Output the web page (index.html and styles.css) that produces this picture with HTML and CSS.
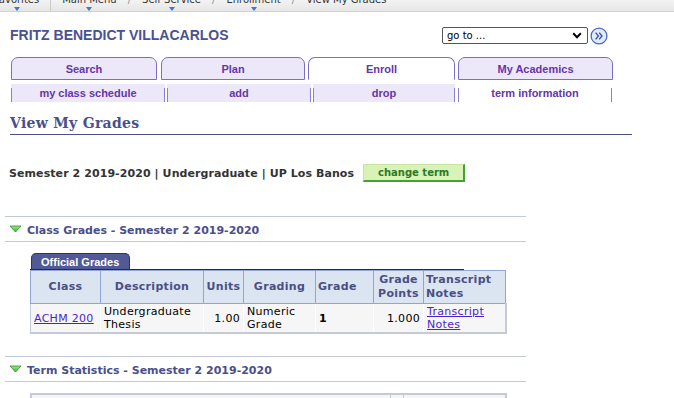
FILE: index.html
```html
<!DOCTYPE html>
<html lang="en">
 <head>
  <meta charset="utf-8">
  <title>View My Grades</title>
  <link rel="stylesheet" href="styles.css">
 </head>
 <body>
  <div class="crumbs">
   <div class="crumb-line">
    <span class="crumb fav">Favorites<i></i></span>
    <span class="bar-sep"></span>
    <span class="crumb">Main Menu<i></i></span>
    <span class="slash">/</span>
    <span class="crumb">Self Service<i></i></span>
    <span class="slash">/</span>
    <span class="crumb">Enrollment<i></i></span>
    <span class="slash">/</span>
    <span class="crumb">View My Grades</span>
   </div>
  </div>

  <div class="pagehead">
   <h1 class="student">FRITZ BENEDICT VILLACARLOS</h1>
   <div class="goto">
    <div class="goto-select">
     <span>go to ...</span>
     <svg width="10" height="7" viewBox="0 0 10 7"><path d="M1.2 1.3 L5 5.2 L8.8 1.3" fill="none" stroke="#000" stroke-width="2"/></svg>
    </div>
    <svg class="goto-btn" width="18" height="18" viewBox="0 0 18 18">
     <circle cx="9" cy="9" r="7.9" fill="#e3ebfb" stroke="#4a68c4" stroke-width="1.3"/>
     <path d="M5.6 5.6 L8.4 9 L5.6 12.4 M9.2 5.6 L12 9 L9.2 12.4" fill="none" stroke="#2f4fb0" stroke-width="1.3"/>
    </svg>
   </div>
  </div>

  <nav class="tabs">
   <a class="tab t1">Search</a>
   <a class="tab t2">Plan</a>
   <a class="tab t3 active">Enroll</a>
   <a class="tab t4">My Academics</a>
  </nav>
  <nav class="subtabs">
   <a class="subtab s1">my class schedule</a>
   <a class="subtab s2">add</a>
   <a class="subtab s3">drop</a>
   <a class="subtab s4 active">term information</a>
  </nav>

  <h2 class="page-title">View My Grades</h2>

  <div class="term-row">
   <span class="term-text">Semester 2 2019-2020 | Undergraduate | UP Los Banos</span>
   <a class="btn-change">change term</a>
  </div>

  <div class="section-head">
   <svg width="13" height="8" viewBox="0 0 13 8">
    <defs><linearGradient id="g1" x1="0" y1="0" x2="0" y2="1"><stop offset="0" stop-color="#a6e690"/><stop offset="1" stop-color="#3dae2c"/></linearGradient></defs>
    <path d="M1 1 L12 1 L6.5 7 Z" fill="url(#g1)" stroke="#2e8a28" stroke-width="0.8"/>
   </svg>
   <span>Class Grades - Semester 2 2019-2020</span>
  </div>

  <div class="grid-box">
   <div class="grid-tabs"><span class="grid-tab">Official Grades</span></div>
   <table class="grades">
    <colgroup>
     <col style="width:70px"><col style="width:103px"><col style="width:40px"><col style="width:72px">
     <col style="width:58px"><col style="width:50px"><col style="width:82px">
    </colgroup>
    <tr>
     <th>Class</th>
     <th>Description</th>
     <th>Units</th>
     <th>Grading</th>
     <th class="left">Grade</th>
     <th>Grade Points</th>
     <th class="left">Transcript Notes</th>
    </tr>
    <tr>
     <td><a href="#">ACHM 200</a></td>
     <td>Undergraduate Thesis</td>
     <td class="num">1.00</td>
     <td>Numeric Grade</td>
     <td class="bold">1</td>
     <td class="num">1.000</td>
     <td><a href="#">Transcript Notes</a></td>
    </tr>
   </table>
  </div>

  <div class="section-head term-stats">
   <svg width="13" height="8" viewBox="0 0 13 8">
    <defs><linearGradient id="g2" x1="0" y1="0" x2="0" y2="1"><stop offset="0" stop-color="#a6e690"/><stop offset="1" stop-color="#3dae2c"/></linearGradient></defs>
    <path d="M1 1 L12 1 L6.5 7 Z" fill="url(#g2)" stroke="#2e8a28" stroke-width="0.8"/>
   </svg>
   <span>Term Statistics - Semester 2 2019-2020</span>
  </div>

  <table class="stats">
   <colgroup><col style="width:359px"><col style="width:13px"><col style="width:103px"></colgroup>
   <tr><td>&nbsp;</td><td>&nbsp;</td><td>&nbsp;</td></tr>
   <tr><td>&nbsp;</td><td>&nbsp;</td><td>&nbsp;</td></tr>
  </table>
 </body>
</html>
```

FILE: styles.css
```css
html, body {
  margin:0; background:#fff;
  font-family:"DejaVu Sans", sans-serif; font-size:11px; color:#000;
}
a { cursor:pointer; }

/* breadcrumb bar, scrolled partly out of view */
.crumbs {
  height:11px; overflow:hidden;
  background:linear-gradient(#f3f3f3, #e6e6e6);
  border-bottom:1px solid #d2d2d2;
}
.crumb-line {
  display:flex; align-items:flex-start;
  margin-top:-6px;
  font-size:10px; line-height:12px; color:#333;
}
.crumb {
  display:flex; flex-direction:column; align-items:center; white-space:nowrap;
}
.crumb i {
  width:0; height:0; margin-top:1px;
  border-left:3px solid transparent; border-right:3px solid transparent;
  border-top:4px solid #3a78d2;
}
.fav { margin-left:-6px; }
.bar-sep { width:1px; height:24px; background:#c9c9c9; margin:0 11px; }
.slash { padding:0 11px; color:#8a90a6; }

/* student name + go to */
.pagehead {
  display:flex; justify-content:space-between; align-items:center;
  width:598px; height:17px; margin:15px 0 0 10px;
}
.student {
  margin:0; font:bold 14px/17px "Liberation Sans", Arial, sans-serif; color:#4a5192;
}
.goto { display:flex; align-items:center; gap:2px; }
.goto-select {
  display:flex; justify-content:space-between; align-items:center;
  box-sizing:border-box; width:146px; height:17px; padding:0 5px 0 4px;
  border:1px solid #555; border-radius:2px; background:#fff;
  font-size:10px; color:#000;
}

/* tabs */
.tabs { display:flex; margin:13px 0 0 11px; }
.tab, .subtab {
  display:flex; align-items:center; justify-content:center; box-sizing:border-box;
  font:bold 11px "Liberation Sans", Arial, sans-serif; color:#6536a6;
}
.tab {
  height:23px;
  background:#ece8fa; border:1px solid #7c6ec9; border-radius:7px 7px 0 0;
}
.tab.active { background:#fff; border-bottom-color:#fff; }
.t1 { width:146px; }
.t2 { width:144px; margin-left:4px; }
.t3 { width:147px; margin-left:3px; }
.t4 { width:155px; margin-left:3px; }

.subtabs { display:flex; margin:4px 0 0 11px; }
.subtab {
  position:relative; height:18px; background:#ece8fa;
}
.subtab::before, .subtab::after {
  content:""; position:absolute; top:4px; bottom:0; width:1px; background:#8a7fd2;
}
.subtab::before { left:0; }
.subtab::after { right:0; }
.subtab.active { background:#fff; }
.s1 { width:154px; }
.s2 { width:144px; margin-left:2px; }
.s3 { width:142px; margin-left:2px; }
.s4 { width:154px; margin-left:3px; }

/* page title */
.page-title {
  width:622px; margin:12px 0 0 10px; padding-bottom:2px;
  border-bottom:1px solid #4a4f8a;
  font:bold 14px/18px "DejaVu Serif", serif; color:#4a4f8a; letter-spacing:0.3px;
}

.term-row {
  display:flex; align-items:center; gap:9px;
  height:18px; margin:29px 0 0 9px;
}
.term-text { font-weight:bold; color:#333; letter-spacing:0.08px; }
.btn-change {
  display:flex; align-items:center; justify-content:center; box-sizing:border-box;
  width:102px; height:18px;
  background:#d9f2b6; border:1px solid #c6e4a2;
  border-right:2px solid #43a332; border-bottom:2px solid #43a332;
  font-size:10px; font-weight:bold; color:#2c7a27;
}

/* collapsible section headers */
.section-head {
  display:flex; align-items:center; gap:5px;
  box-sizing:border-box; width:521px; height:26px; margin:34px 0 0 5px; padding:3px 0 0 4px;
  border-top:1px solid #c3c8dc; border-bottom:1px solid #c3c8dc;
  font-weight:bold; color:#4a4f8a;
}
.section-head svg { margin-top:-4px; }
.term-stats { margin-top:22px; }

/* grades grid */
.grid-box { margin:11px 0 0 30px; }
.grid-tabs {
  display:flex; width:434px; height:17px; box-sizing:border-box;
  border-bottom:1px solid #2a2a3a;
}
.grid-tab {
  display:flex; align-items:center; box-sizing:border-box;
  width:99px; height:16px; margin-left:1px; padding-left:9px;
  background:#515996; border:1px solid #2f3460; border-bottom:none; border-radius:5px 5px 0 0;
  font:bold 11px "Liberation Sans", Arial, sans-serif; color:#fff;
}
table { border-collapse:collapse; table-layout:fixed; }
.grades { width:475px; }
.grades th {
  height:32px; padding:0 2px;
  background:#dbe5f1; border:1px solid #90a5d3;
  font-size:11px; line-height:14px; letter-spacing:0.3px; color:#4a4f86; text-align:center;
}
.grades th.left { text-align:left; }
.grades td {
  height:28px; padding:0 3px; vertical-align:middle;
  background:#f6f6f6; border-left:1px solid #fff; border-bottom:2px solid #c6cad8;
  line-height:13px; letter-spacing:0.3px;
}
.grades td:first-child { border-left:1px solid #c6cad8; }
.grades td:last-child { border-right:2px solid #c6cad8; }
.grades td.num { text-align:right; }
.grades td.bold { font-weight:bold; }
.grades a { color:#4b1fd2; }

.stats { width:475px; margin:11px 0 0 30px; border:2px solid #c6cad8; }
.stats td { height:20px; background:#f5f5f5; border:1px solid #c6cad8; }
```
